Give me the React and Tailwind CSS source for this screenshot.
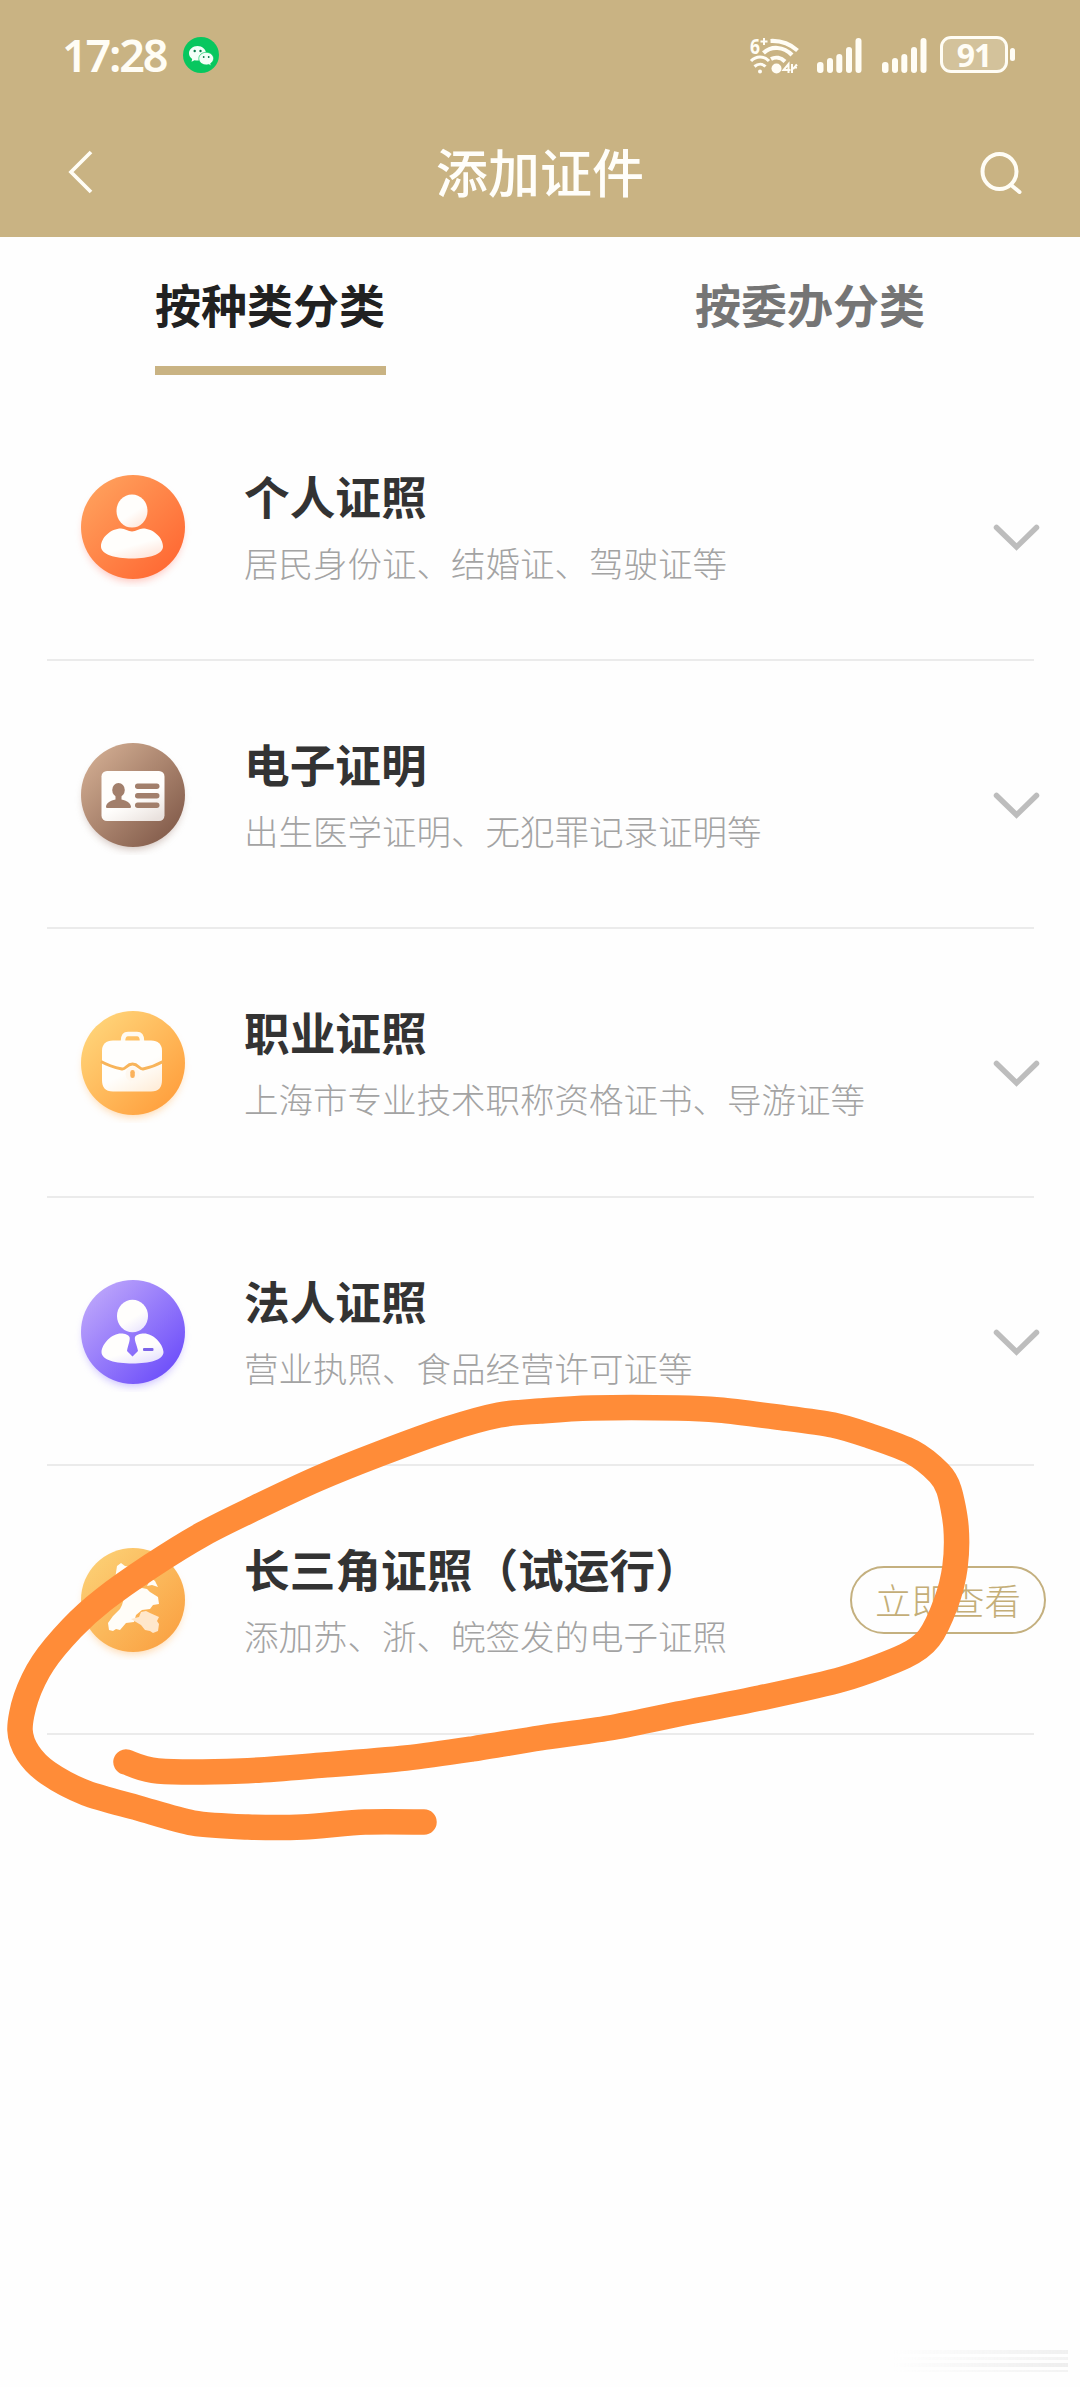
import React, { useState } from 'react';

const CATEGORIES = [
    { id: 'personal', title: '个人证照', desc: '居民身份证、结婚证、驾驶证等' },
    { id: 'electronic', title: '电子证明', desc: '出生医学证明、无犯罪记录证明等' },
    { id: 'career', title: '职业证照', desc: '上海市专业技术职称资格证书、导游证等' },
    { id: 'legal', title: '法人证照', desc: '营业执照、食品经营许可证等' },
    { id: 'delta', title: '长三角证照（试运行）', desc: '添加苏、浙、皖签发的电子证照', action: '立即查看' },
];

const DISCS = {
    personal: { from: '#ffa05c', to: '#ff6833', glow: '#ff8a7a' },
    electronic: { from: '#d0ab90', to: '#835c4b', glow: '#a5877a' },
    career: { from: '#ffd479', to: '#ff9f3d', glow: '#ffb866' },
    legal: { from: '#bda6fb', to: '#6c4dfa', glow: '#9a85ff' },
    delta: { from: '#fccf74', to: '#faa243', glow: '#ffb866' },
};

// points of the freehand ring, in page pixels
const MARKER_POINTS = [
    [424, 1822], [365, 1822], [303, 1827], [248, 1827], [193, 1823], [138, 1808], [86, 1793],
    [48, 1773], [28, 1753], [20, 1730], [26, 1698], [43, 1663], [72, 1628], [103, 1600],
    [151, 1566], [203, 1534], [255, 1508], [317, 1479], [379, 1454], [448, 1429], [499, 1415],
    [540, 1411], [592, 1408], [678, 1408], [719, 1410], [777, 1417], [833, 1425], [870, 1436],
    [912, 1452], [939, 1473], [949, 1490], [956, 1527], [955, 1567], [946, 1603], [929, 1638],
    [905, 1656], [843, 1679], [760, 1698], [678, 1714], [609, 1728], [540, 1738], [472, 1749],
    [406, 1758], [324, 1765], [241, 1771], [158, 1771], [126, 1762],
];

function smoothPath(points) {
    let d = `M${points[0][0]} ${points[0][1]}`;
    for (let i = 0; i < points.length - 1; i++) {
        const p0 = points[i - 1] || points[i];
        const p1 = points[i];
        const p2 = points[i + 1];
        const p3 = points[i + 2] || p2;
        const c1 = [p1[0] + (p2[0] - p0[0]) / 7, p1[1] + (p2[1] - p0[1]) / 7];
        const c2 = [p2[0] - (p3[0] - p1[0]) / 7, p2[1] - (p3[1] - p1[1]) / 7];
        d += `C${c1.join(' ')} ${c2.join(' ')} ${p2.join(' ')}`;
    }
    return d;
}

function Glyph({ id }) {
    const fill = `url(#${id}-shine)`;
    switch (id) {
        case 'personal':
            return (
                <g fill={fill}>
                    <ellipse cx="59" cy="44" rx="15.5" ry="16.5" />
                    <path d="M48 61.500c4 0 7 3 11 3s7-3 11-3c10 0 20 9 20 18 0 8-14 12-31 12s-31-4-31-12c0-9 10-18 20-18z" />
                </g>
            );
        case 'electronic':
            return (
                <g>
                    <rect x="28.500" y="36" width="63" height="50" rx="5.500" fill={fill} />
                    <g fill="#a27f6b">
                        <ellipse cx="45.500" cy="55" rx="6.300" ry="7" />
                        <path d="M42.500 60h6v4.500c5 1 9 3.500 9.500 7 0 1-.5 1.500-1.500 1.500h-22c-1 0-1.500-.5-1.500-1.500.5-3.500 4.500-6 9.500-7z" />
                        <rect x="62" y="48.500" width="24.500" height="5.500" rx="2.700" />
                        <rect x="62" y="58" width="24.500" height="5.500" rx="2.700" />
                        <rect x="62" y="67.500" width="24.500" height="5.500" rx="2.700" />
                    </g>
                </g>
            );
        case 'career':
            return (
                <g>
                    <path d="M50 38c0-5 2-7 5-7h9c3 0 5 2 5 7" fill="none" stroke="#fffaf0" strokeWidth="4.500" />
                    <path d="M40 37.500h38c7 0 11 4 11 10v29c0 8-3 12-11 12H40c-8 0-11-4-11-12v-29c0-6 4-10 11-10z" fill={fill} />
                    <path d="M28 58.500c7 4 14 6 21 7.500 4 .5 4.500-5 10.500-5s6.500 5.500 10.500 5c7-1.500 13-3.500 20-7.500" fill="none" stroke="#f8b45a" strokeWidth="3" />
                    <ellipse cx="59.500" cy="71" rx="7" ry="7.500" fill="#fff8ef" />
                    <rect x="57.300" y="67" width="4.500" height="8" rx="2.200" fill="#fbb25c" />
                </g>
            );
        case 'legal':
            return (
                <g fill={fill}>
                    <ellipse cx="59.500" cy="44" rx="15.500" ry="16.300" />
                    <path d="M48 61.500c4 0 7.500 1.500 8.500 3.500 1 3-1.500 8-2.500 14l5.500 5.500L65 79c-1-6-4-11-3-14 1-2 5-3.500 9-3.500 9 0 19 10 19.500 18.500 0 8-14 11.500-31 11.500S28.500 88 28.500 80C29 71.500 39 61.500 48 61.500z" />
                    <rect x="70" y="76" width="10.500" height="3" rx="1" fill="#7c64e8" />
                </g>
            );
        default:
            return (
                <g>
                    <path d="M44 26l4-3 4 3 6 1-4 9-12 3zM78 38l4 3 3 6-6-2-5 1zM35 83l5-7 7-7 2-4 2-7 6-6 12-4 5 1 3 3 8 5 1 7-6 1-3 4-8 1-6 5-2 7-8 1-6 7-4-1-3 2-4-1z" fill="#fffdf8" />
                    <path d="M58 79l8-2 2-5 5-1 4 2 9 4-2 4 2 3-1 7-5 2-3-2-5-1-4-5z" fill="#ffe7cb" />
                </g>
            );
    }
}

function CategoryIcon({ id }) {
    const disc = DISCS[id];
    return (
        <svg className="h-[120px] w-[120px] shrink-0" viewBox="0 0 120 120">
            <defs>
                <linearGradient id={`${id}-disc`} x1="0.1" y1="0.1" x2="0.9" y2="0.9">
                    <stop offset="0" stopColor={disc.from} />
                    <stop offset="1" stopColor={disc.to} />
                </linearGradient>
                <linearGradient id={`${id}-shine`} x1="0.2" y1="0" x2="0.8" y2="1">
                    <stop offset="0.55" stopColor="#fffefc" />
                    <stop offset="1" stopColor="#ffffff" stopOpacity="0.8" />
                </linearGradient>
                <filter id={`${id}-glow`} x="-20%" y="-20%" width="140%" height="140%">
                    <feGaussianBlur stdDeviation="4" />
                </filter>
            </defs>
            <circle cx="60" cy="65" r="49" fill={disc.glow} opacity="0.55" filter={`url(#${id}-glow)`} />
            <circle cx="60" cy="60" r="52" fill={`url(#${id}-disc)`} />
            <Glyph id={id} />
        </svg>
    );
}

function Signal() {
    return (
        <svg className="h-9 w-[45px]" viewBox="0 0 45 36" fill="#fffdf5">
            <rect x="0" y="25" width="6.500" height="11" rx="3" />
            <rect x="10" y="21" width="6" height="15" rx="3" />
            <rect x="19.300" y="17" width="6" height="19" rx="3" />
            <rect x="29" y="10" width="6" height="26" rx="3" />
            <rect x="38.500" y="1" width="6" height="35" rx="3" />
        </svg>
    );
}

function Wifi() {
    return (
        <svg className="h-[38px] w-[49px] overflow-visible" viewBox="0 0 49 38" fill="none" stroke="#fffdf5">
            <text x="0" y="18" fontSize="22" fontWeight="700" fill="#fffdf5" stroke="none" textLength="10" lengthAdjust="spacingAndGlyphs">6</text>
            <path d="M10.500 5.500h7M14 2v7" strokeWidth="2" />
            <path d="M20.500 5c10-.5 19 2.500 27 9.500" strokeWidth="4.200" />
            <path d="M13.500 17c8-7.500 20-6.500 28.500 2" strokeWidth="4.200" />
            <path d="M21 23c4.500-2.500 10-1.500 14 2.500" strokeWidth="4" />
            <path d="M1 25c5-5.500 13-5.500 18 0" strokeWidth="3" />
            <path d="M4.500 30.500c3.500-3 8-3 11 0" strokeWidth="3" />
            <circle cx="10" cy="35.500" r="2" fill="#fffdf5" stroke="none" />
            <circle cx="26.500" cy="32.500" r="5" fill="#fffdf5" stroke="none" />
            <path d="M38.500 37V28l-5 6h7M42 28v9M43 33l4-4.500M46 28.500v4" strokeWidth="2" />
        </svg>
    );
}

function WeChat() {
    return (
        <svg className="h-9 w-9" viewBox="0 0 36 36">
            <circle cx="18" cy="18" r="18" fill="#07c75f" />
            <path d="M14.500 9C9.800 9 6 12.300 6 16.300c0 2.300 1.200 4.300 3.200 5.700l-.7 2.700 3-1.500c1 .3 2 .4 3 .4 4.700 0 8.500-3.300 8.500-7.300S19.200 9 14.500 9z" fill="#f2fff8" />
            <path d="M23.200 15.300c-4.100 0-7.400 2.800-7.400 6.300s3.300 6.300 7.400 6.300c.9 0 1.700-.1 2.500-.4l2.500 1.300-.6-2.300c1.800-1.200 3-2.900 3-4.900 0-3.500-3.300-6.300-7.400-6.300z" fill="#f2fff8" stroke="#07c75f" strokeWidth="0.700" />
            <g fill="#087a4a">
                <circle cx="11.700" cy="14" r="1.200" />
                <circle cx="17.500" cy="14" r="1.200" />
                <circle cx="20.700" cy="20" r="0.900" />
                <circle cx="25.700" cy="20" r="0.900" />
            </g>
        </svg>
    );
}

function StatusBar() {
    return (
        <div className="flex h-[109px] items-center justify-between pl-[62px] pr-[65px] font-['Noto_Sans',sans-serif]">
            <div className="flex items-center gap-[12px]">
                <span className="w-[109px] text-[45px] font-semibold leading-none tracking-[-2.200px] text-[#fffdf5]">17:28</span>
                <WeChat />
            </div>
            <div className="flex items-center">
                <Wifi />
                <div className="ml-[18px] flex gap-5">
                    <Signal />
                    <Signal />
                </div>
                <div className="ml-[13px] flex h-[37px] w-[68px] items-center justify-center rounded-[11px] border-[3px] border-[#fffdf5] bg-white/20 text-[32px] font-bold leading-none tracking-[-1px] text-[#fffdf5]">
                    91
                </div>
                <div className="ml-[2px] h-[13px] w-[5px] rounded-full bg-[#fffdf5]" />
            </div>
        </div>
    );
}

function Tab({ label, selected, onClick }) {
    return (
        <button onClick={onClick} className="flex flex-1 flex-col items-center">
            <span className={selected ? 'text-[46px] font-bold leading-[60px] text-[#212121]' : 'text-[46px] font-bold leading-[60px] text-[#757575]'}>
                {label}
            </span>
            <span className={selected ? 'mt-[33px] h-[9px] w-[231px] bg-[#c9b383]' : 'mt-[33px] h-[9px] w-[231px]'} />
        </button>
    );
}

function CategoryRow({ item }) {
    return (
        <div className="ml-[47px] mr-[46px] flex h-[268.400px] items-start border-b-2 border-[#ebebeb]">
            <div className="ml-[26px] mt-[74px]">
                <CategoryIcon id={item.id} />
            </div>
            <div className="ml-[51px] mt-[72px] flex-1">
                <div className="whitespace-nowrap text-[45.700px] font-bold leading-[60px] text-[#333]">{item.title}</div>
                <div className="mt-[12px] whitespace-nowrap text-[34.500px] font-light leading-[50px] text-[#a3a3a3]">{item.desc}</div>
            </div>
            {item.action ? (
                <button className="-mr-[12px] mt-[100px] h-[68px] w-[196px] rounded-full border-[2.500px] border-[#c4b07f] text-[36.500px] font-light leading-none text-[#c4ae78]">
                    {item.action}
                </button>
            ) : (
                <svg className="-mr-[6px] mt-[131px] h-[27px] w-[47px]" viewBox="0 0 47 27" fill="none" stroke="#bdbdbd" strokeWidth="5.500" strokeLinecap="round">
                    <path d="M3.500 3.500L23.500 23L43.500 3.500" />
                </svg>
            )}
        </div>
    );
}

function MarkerStroke() {
    return (
        <svg className="pointer-events-none absolute left-0 top-[1380px] h-[480px] w-[1080px]" viewBox="0 1380 1080 480" fill="none">
            <path d={smoothPath(MARKER_POINTS)} stroke="#ff8c38" strokeWidth="25.500" strokeLinecap="round" strokeLinejoin="round" />
        </svg>
    );
}

export default function App() {
    const [tab, setTab] = useState('kind');

    return (
        <div className="relative flex h-[2387px] w-[1080px] flex-col overflow-hidden bg-[#fefefe] font-['Noto_Sans_CJK_SC',sans-serif]">
            <header className="h-[237px] shrink-0 bg-[#c9b383]">
                <StatusBar />
                <div className="flex h-[126px] items-center justify-between pl-[66px] pr-[57px]">
                    <svg className="h-[44px] w-[44px]" viewBox="0 0 44 44" fill="none" stroke="#fffdf5" strokeWidth="3.700">
                        <path d="M25 2L5 22l20 20" />
                    </svg>
                    <h1 className="-mt-[3px] pr-[9px] text-[52px] font-medium leading-none text-[#fffefa]">添加证件</h1>
                    <svg className="h-[44px] w-[44px]" viewBox="0 0 44 44" fill="none" stroke="#fffdf5" strokeWidth="4">
                        <ellipse cx="20.500" cy="21.500" rx="17" ry="17.500" />
                        <path d="M32 35l8.500 7" strokeLinecap="round" />
                    </svg>
                </div>
            </header>
            <nav className="flex h-[155.600px] shrink-0 items-start pt-[36px]">
                <Tab label="按种类分类" selected={tab === 'kind'} onClick={() => setTab('kind')} />
                <Tab label="按委办分类" selected={tab === 'office'} onClick={() => setTab('office')} />
            </nav>
            <main className="flex flex-col">
                {CATEGORIES.map((item) => (
                    <CategoryRow key={item.id} item={item} />
                ))}
            </main>
            <div className="mb-[15px] ml-auto mr-[12px] mt-auto flex w-[176px] flex-col gap-[3px] opacity-50">
                <div className="h-[4px] bg-linear-to-r from-transparent to-[#e2e2e2]" />
                <div className="h-[3px] bg-linear-to-r from-transparent to-[#e8e8e8]" />
                <div className="h-[4px] bg-linear-to-r from-transparent to-[#dedede]" />
                <div className="h-[2px] bg-linear-to-r from-transparent to-[#e8e8e8]" />
            </div>
            <MarkerStroke />
        </div>
    );
}
